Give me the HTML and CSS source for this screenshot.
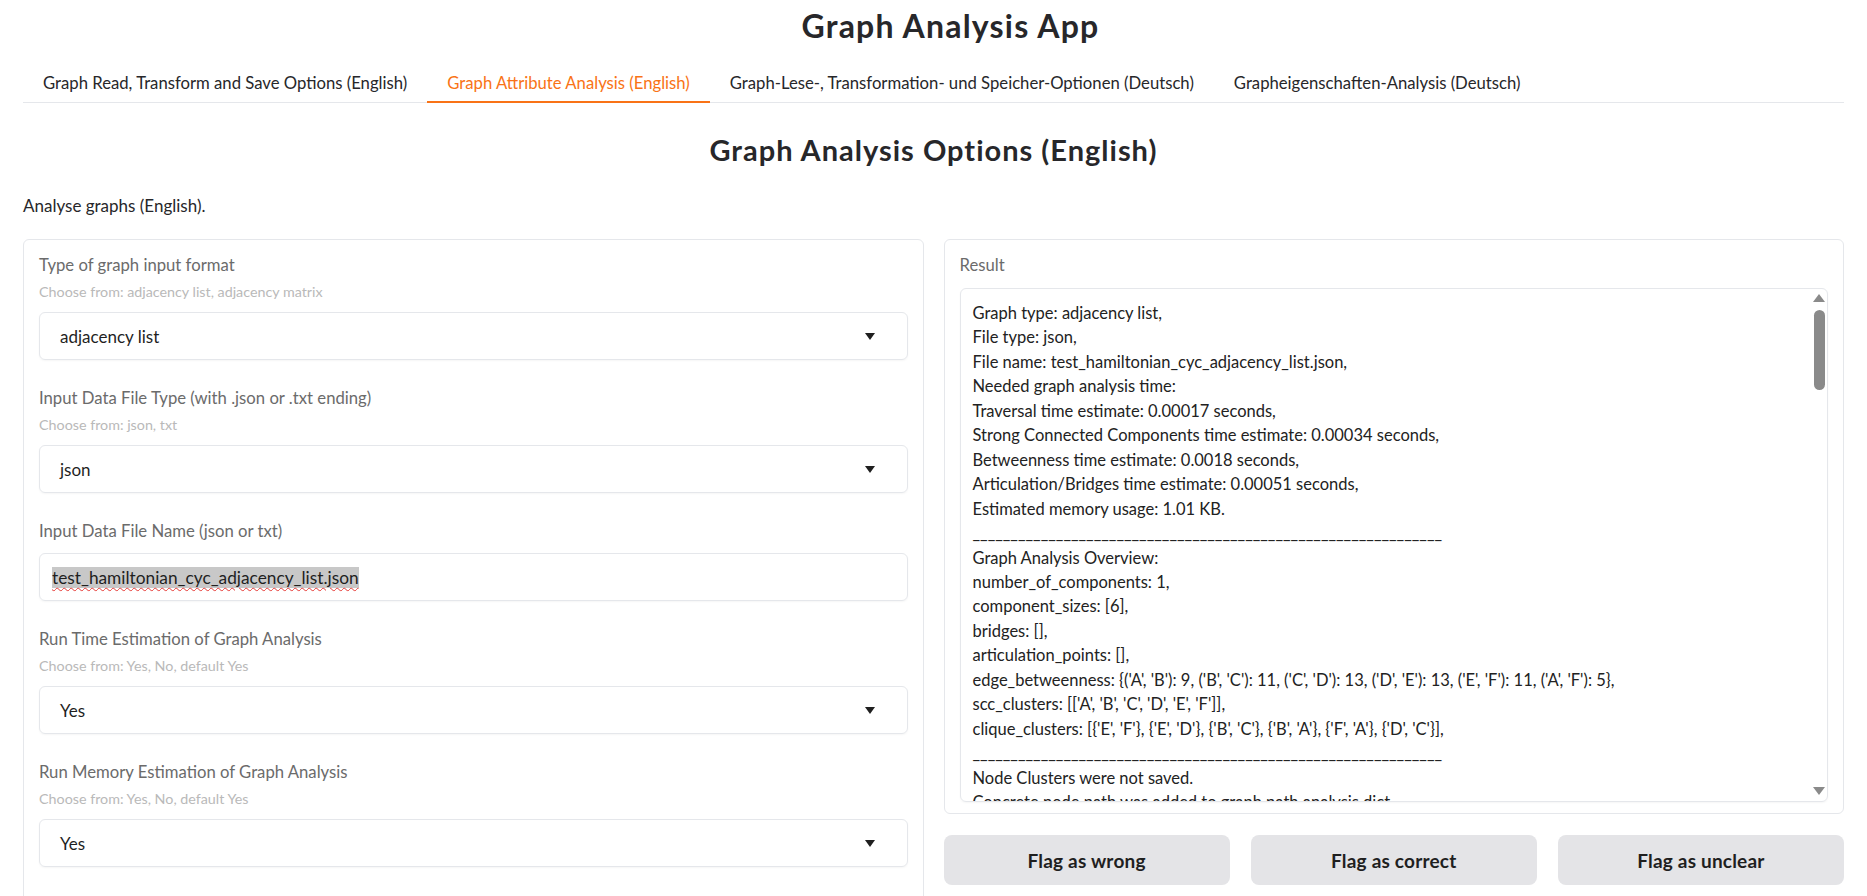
FILE: index.html
```html
<!DOCTYPE html>
<html lang="en">
<head>
    <meta charset="UTF-8">
    <meta name="viewport" content="width=device-width, initial-scale=1.0">
    <title>Graph Analysis App</title>
    <link rel="stylesheet" href="styles.css">
</head>
<body>
    <div class="app">
        <h1 class="app-title">Graph Analysis App</h1>

        <div class="tabs">
            <button class="tab">Graph Read, Transform and Save Options (English)</button>
            <button class="tab active">Graph Attribute Analysis (English)</button>
            <button class="tab">Graph-Lese-, Transformation- und Speicher-Optionen (Deutsch)</button>
            <button class="tab">Grapheigenschaften-Analysis (Deutsch)</button>
        </div>

        <h2 class="page-title">Graph Analysis Options (English)</h2>
        <p class="intro">Analyse graphs (English).</p>

        <div class="columns">
            <div class="panel form-panel">
                <div class="field">
                    <span class="field-label">Type of graph input format</span>
                    <span class="field-info">Choose from: adjacency list, adjacency matrix</span>
                    <div class="select">
                        <span>adjacency list</span>
                        <span class="caret"></span>
                    </div>
                </div>

                <div class="field">
                    <span class="field-label">Input Data File Type (with .json or .txt ending)</span>
                    <span class="field-info">Choose from: json, txt</span>
                    <div class="select">
                        <span>json</span>
                        <span class="caret"></span>
                    </div>
                </div>

                <div class="field">
                    <span class="field-label">Input Data File Name (json or txt)</span>
                    <div class="textbox">
                        <span class="selected-text">test_hamiltonian_cyc_adjacency_list.json</span>
                    </div>
                </div>

                <div class="field">
                    <span class="field-label">Run Time Estimation of Graph Analysis</span>
                    <span class="field-info">Choose from: Yes, No, default Yes</span>
                    <div class="select">
                        <span>Yes</span>
                        <span class="caret"></span>
                    </div>
                </div>

                <div class="field">
                    <span class="field-label">Run Memory Estimation of Graph Analysis</span>
                    <span class="field-info">Choose from: Yes, No, default Yes</span>
                    <div class="select">
                        <span>Yes</span>
                        <span class="caret"></span>
                    </div>
                </div>
            </div>

            <div class="output-col">
                <div class="panel result-panel">
                    <span class="field-label">Result</span>
                    <div class="result-box">
                        <div class="result-text">
                            <div>Graph type: adjacency list,</div>
                            <div>File type: json,</div>
                            <div>File name: test_hamiltonian_cyc_adjacency_list.json,</div>
                            <div>Needed graph analysis time:</div>
                            <div>Traversal time estimate: 0.00017 seconds,</div>
                            <div>Strong Connected Components time estimate: 0.00034 seconds,</div>
                            <div>Betweenness time estimate: 0.0018 seconds,</div>
                            <div>Articulation/Bridges time estimate: 0.00051 seconds,</div>
                            <div>Estimated memory usage: 1.01 KB.</div>
                            <div>______________________________________________________________</div>
                            <div>Graph Analysis Overview:</div>
                            <div>number_of_components: 1,</div>
                            <div>component_sizes: [6],</div>
                            <div>bridges: [],</div>
                            <div>articulation_points: [],</div>
                            <div>edge_betweenness: {('A', 'B'): 9, ('B', 'C'): 11, ('C', 'D'): 13, ('D', 'E'): 13, ('E', 'F'): 11, ('A', 'F'): 5},</div>
                            <div>scc_clusters: [['A', 'B', 'C', 'D', 'E', 'F']],</div>
                            <div>clique_clusters: [{'E', 'F'}, {'E', 'D'}, {'B', 'C'}, {'B', 'A'}, {'F', 'A'}, {'D', 'C'}],</div>
                            <div>______________________________________________________________</div>
                            <div>Node Clusters were not saved.</div>
                            <div>Concrete node path was added to graph path analysis dict.</div>
                        </div>
                        <div class="scrollbar">
                            <span class="arrow-up"></span>
                            <span class="thumb"></span>
                            <span class="track"></span>
                            <span class="arrow-down"></span>
                        </div>
                    </div>
                </div>

                <div class="flag-row">
                    <button class="flag-btn">Flag as wrong</button>
                    <button class="flag-btn">Flag as correct</button>
                    <button class="flag-btn">Flag as unclear</button>
                </div>
            </div>
        </div>
    </div>
</body>
</html>
```

FILE: styles.css
```css
html, body {
    overflow: hidden;
}

body {
    margin: 0;
    background-color: #ffffff;
    color: #27272a;
    font-family: "Source Sans Pro", Lato, "Noto Sans", sans-serif;
}

.app {
    padding: 0 23px;
}

.app-title {
    margin: 6px 0 0 0;
    padding-left: 34px;
    font-size: 32px;
    line-height: 40px;
    font-weight: 700;
    letter-spacing: 1.2px;
    text-align: center;
    color: #27272a;
}

.tabs {
    display: flex;
    margin-top: 18px;
    border-bottom: 1px solid #e5e7eb;
}

.tab {
    height: 39px;
    padding: 0 20px;
    margin-bottom: -1px;
    border: none;
    border-bottom: 2px solid transparent;
    background: none;
    font-family: inherit;
    font-size: 16.7px;
    color: #27272a;
    cursor: pointer;
}

.tab.active {
    color: #f97316;
    border-bottom-color: #f97316;
}

.page-title {
    margin: 27px 0 0 0;
    font-size: 29px;
    line-height: 40px;
    font-weight: 700;
    letter-spacing: 1px;
    text-align: center;
}

.intro {
    margin: 24px 0 0 0;
    font-size: 17px;
    line-height: 24px;
}

.columns {
    display: grid;
    grid-template-columns: 1fr 1fr;
    gap: 20px;
    margin-top: 21px;
    align-items: start;
}

.panel {
    border: 1px solid #e5e7eb;
    border-radius: 6px;
    background-color: #ffffff;
}

.form-panel {
    display: flex;
    flex-direction: column;
    gap: 27px;
    padding: 14px 15px 40px 15px;
}

.field {
    display: flex;
    flex-direction: column;
}

.field-label {
    font-size: 16.7px;
    line-height: 22px;
    color: #6b6b6b;
}

.field-info {
    margin-top: 7px;
    font-size: 14.3px;
    line-height: 18px;
    color: #b9b9b9;
}

.select,
.textbox {
    display: flex;
    align-items: center;
    height: 48px;
    box-sizing: border-box;
    margin-top: 11px;
    border: 1px solid #e5e7eb;
    border-radius: 6px;
    box-shadow: 0 1px 2px rgba(0, 0, 0, 0.04);
    font-size: 17px;
    color: #1f1f1f;
}

.select {
    justify-content: space-between;
    padding: 0 32px 0 20px;
}

.caret {
    width: 0;
    height: 0;
    border-left: 5.5px solid transparent;
    border-right: 5.5px solid transparent;
    border-top: 7px solid #1f1f1f;
}

.textbox {
    padding: 0 12px;
    font-size: 17.3px;
}

.selected-text {
    background-color: #c8c8c8;
    text-decoration: underline wavy #e53935;
    text-decoration-thickness: 1px;
    text-underline-offset: 3px;
}

.output-col {
    display: flex;
    flex-direction: column;
    gap: 21px;
}

.result-panel {
    display: flex;
    flex-direction: column;
    padding: 14px 15px 11px 15px;
}

.result-box {
    display: flex;
    height: 514px;
    box-sizing: border-box;
    margin-top: 12px;
    border: 1px solid #e5e7eb;
    border-radius: 6px;
    box-shadow: 0 1px 2px rgba(0, 0, 0, 0.04);
    overflow: hidden;
}

.result-text {
    flex: 1;
    padding: 12px 12px 0 12px;
    overflow: hidden;
    font-size: 16.5px;
    line-height: 24.45px;
    color: #222222;
    white-space: nowrap;
}

.scrollbar {
    display: flex;
    flex-direction: column;
    align-items: center;
    width: 16px;
    padding: 5px 0 6px 0;
}

.arrow-up,
.arrow-down {
    width: 0;
    height: 0;
    border-left: 6px solid transparent;
    border-right: 6px solid transparent;
}

.arrow-up {
    border-bottom: 8px solid #8a8a8a;
}

.arrow-down {
    border-top: 8px solid #8a8a8a;
}

.thumb {
    width: 11px;
    height: 80px;
    margin-top: 8px;
    border-radius: 6px;
    background-color: #8a8a8a;
}

.track {
    flex: 1;
}

.flag-row {
    display: grid;
    grid-template-columns: 1fr 1fr 1fr;
    gap: 21px;
}

.flag-btn {
    height: 50px;
    border: none;
    border-radius: 8px;
    background-color: #e4e4e7;
    font-family: inherit;
    font-size: 19px;
    font-weight: 700;
    letter-spacing: 0.2px;
    color: #1f1f1f;
    cursor: pointer;
}
```
